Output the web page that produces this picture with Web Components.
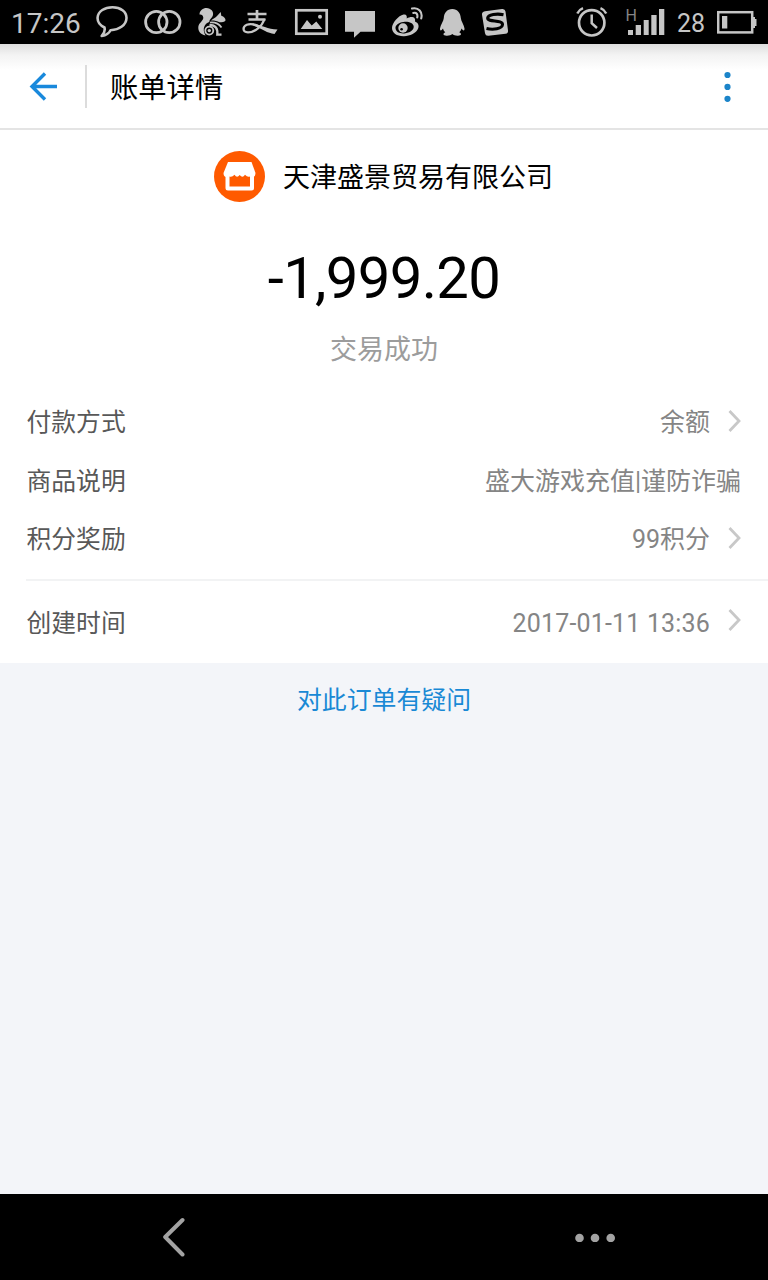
<!DOCTYPE html>
<html lang="zh-CN">
<head>
<meta charset="utf-8">
<title>账单详情</title>
<style>
  body {
    margin: 0;
    height: 1280px;
    overflow: hidden;
    font-family: Roboto, "Noto Sans CJK SC", sans-serif;
    background-color: #f3f5f9;
  }
</style>
</head>
<body>
<bill-page></bill-page>

<script>
// every status icon is drawn on one 44px high strip, so they share a baseline
const STATUS_ICONS = {
  message: [96, 32, `
    <path d="M104.500 27.500C99.500 25 97.300 21.500 97.600 17.500C98.200 11.200 104.500 7.300 112.500 7.300C120.500 7.300 126.600 11.500 126.500 18C126.300 25 119.500 29.700 110.500 30.200C109 33.300 106.200 35.300 101.700 36C104.200 33.500 105.200 30.800 104.500 27.500Z" fill="none" stroke="#c6c6c6" stroke-width="2.600" stroke-linejoin="round"/>`],
  rings: [144, 38, `
    <g fill="none" stroke="#c6c6c6" stroke-width="2.800"><circle cx="156.300" cy="22" r="10.700"/><circle cx="169.300" cy="22" r="10.700"/></g>`],
  squirrel: [198, 28, `
    <path fill="#c6c6c6" d="M199.500 14.500C199.500 10.500 203 8 206.500 8C211 8.200 213.800 11.500 213 15C212.300 18 209.500 19 209.300 22C204.500 23.500 201.800 29 205.500 35.500C200.500 34.500 198 31 198.300 27C198.700 22.500 203.500 21 203.300 17.500C203 15 201.500 14.200 199.500 14.500Z"/>
    <path fill="#c6c6c6" d="M211 20.500C213 18.500 215.500 17.700 217 16L220.700 12L221.300 15.700C224 16.500 225.800 18.500 225.500 20.500C224.500 22.300 222 22.300 219.500 22.300C217 21 214 20.300 211 20.500Z"/>
    <path d="M210 22.500C215.500 22 219.500 24.500 221.500 27.500" fill="none" stroke="#c6c6c6" stroke-width="1.700"/>
    <path d="M209.500 25C215.500 25 218 28.500 217.300 34.700H221.500" fill="none" stroke="#c6c6c6" stroke-width="2.300"/>
    <circle cx="209.300" cy="30.600" r="4" fill="none" stroke="#c6c6c6" stroke-width="1.800"/><circle cx="209.300" cy="30.600" r="1.700" fill="#c6c6c6"/>`],
  alipay: [242, 36, `
    <path d="M247.500 14H266.500M257 10V20M248.500 19.500H265.500" fill="none" stroke="#c6c6c6" stroke-width="2.700"/>
    <path d="M264.500 19C262 26.500 255 32.300 248 32.300C242.200 32.300 242.400 26.700 246.800 24.800C251 23 255.500 24.500 260 27" fill="none" stroke="#c6c6c6" stroke-width="2.300"/>
    <path d="M252.500 23.300C261 25 267 28.800 277.500 29.500L274.500 34C267 33.500 261.500 28.500 252.500 25.300Z" fill="#c6c6c6"/>`],
  picture: [294, 35, `
    <rect x="296.300" y="10.300" width="30.400" height="23.400" fill="none" stroke="#c6c6c6" stroke-width="2.700"/>
    <path d="M300.700 29L307 20L311.700 25.500L316.300 21.500L322.300 29Z" fill="#c6c6c6"/><circle cx="320" cy="16.700" r="2" fill="#c6c6c6"/>`],
  chat: [345, 30, `<path d="M345 11H375V31.700H360.500L354 37.700V31.700H345Z" fill="#c6c6c6"/>`],
  weibo: [391, 32, `
    <path fill="#c6c6c6" fill-rule="evenodd" d="M392 28C392 23 398.500 15.500 403.500 14.500C406.500 14 407.200 16 406.700 18.500C411 16 416 16.500 415 21.500C423 25 417 35.700 404 36.200C397 36.400 392 33 392 28ZM395.500 28.300C396 32.300 400 33.800 404.500 33.400C410 32.900 414 30 413.700 26.500C413.300 23 408.500 21.300 403.500 22C398.500 22.700 395.200 25.200 395.500 28.300Z"/>
    <circle cx="403" cy="28" r="4.700" fill="#c6c6c6"/><circle cx="401.600" cy="29.200" r="1.300" fill="#000"/>
    <path d="M412 8.600C418.500 7 423 12 421.200 18.500M413.300 13C416.500 12 418 14.500 417.200 17.500" fill="none" stroke="#c6c6c6" stroke-width="2.100" stroke-linecap="round"/>`],
  penguin: [439, 26, `
    <path fill="#c6c6c6" d="M452.300 9C447 9 444 13 443.800 18C443.600 21.500 440.500 24.500 440 28.500C439.900 31 441.200 31 443 28.500C443.500 30.300 444.200 31.200 445.300 32.200C442.700 33.300 442.800 35.600 446.500 35.700C449 35.800 451 35.200 452.300 34C453.700 35.200 455.500 35.800 458 35.700C461.700 35.600 461.800 33.300 459.200 32.200C460.300 31.200 461 30.300 461.500 28.500C463.300 31 464.600 31 464.500 28.500C464 24.500 461 21.500 460.800 18C460.500 13 457.500 9 452.300 9Z"/>`],
  sogou: [481, 28, `
    <path fill="#c6c6c6" d="M485 11.300L502 9Q505 8.600 505.500 11.500L508 30.500Q508.400 33.300 505.500 33.800L488.500 35.700Q485.500 36 485 33.200L482 14.700Q481.600 11.900 485 11.300Z"/>
    <path d="M503.500 14.700C497 13.300 488 14.500 487.700 18C487.500 22.500 502.500 19.500 502.500 24.500C502.300 29 493 30 486.500 28.500" fill="none" stroke="#000" stroke-width="3.100"/>`],
  alarm: [576, 32, `
    <circle cx="591.700" cy="22.800" r="12.700" fill="none" stroke="#c6c6c6" stroke-width="2.700"/>
    <path d="M591.700 14.500V23.200L597 28" fill="none" stroke="#c6c6c6" stroke-width="2.500"/>
    <path d="M577.300 13.500C578.500 11 580.500 9.200 583 8.200M606.200 13.500C605 11 603 9.200 600.500 8.200" fill="none" stroke="#c6c6c6" stroke-width="2.500"/>`],
  signal: [626, 39, `
    <text x="625.500" y="20.500" font-size="16" fill="#858585">H</text>
    <path fill="#c6c6c6" d="M628 30h5v5h-5zM635.700 25h5.300v10h-5.300zM643.700 20h5v15h-5zM651.300 15h5.300v20h-5.300zM659 9h5.300v26h-5.300z"/>`],
  battery: [717, 40, `
    <rect x="718.200" y="12.200" width="34" height="20.200" fill="none" stroke="#c6c6c6" stroke-width="2.500"/>
    <path fill="#c6c6c6" d="M752.500 17H755V19H756.500V26H755V28H752.500ZM722 16H727.300V28.500H722Z"/>`]
};

class StatusIcon extends HTMLElement {
  constructor() {
    super();
    this.attachShadow({ mode: 'open' });
  }

  connectedCallback() {
    const [x, width, shapes] = STATUS_ICONS[this.getAttribute('name')];
    this.shadowRoot.innerHTML = `
      <style>
        :host { display: block; flex: none; }
        svg { display: block; }
      </style>
      <svg width="${width}" height="44" viewBox="${x} 0 ${width} 44">${shapes}</svg>
    `;
  }
}

customElements.define('status-icon', StatusIcon);

class StatusBar extends HTMLElement {
  constructor() {
    super();
    this.attachShadow({ mode: 'open' });
    this.shadowRoot.innerHTML = `
      <style>
        :host {
          display: flex;
          align-items: center;
          height: 44px;
          padding: 0 11px;
          box-sizing: border-box;
          background-color: #000;
          color: #c6c6c6;
        }
        .time { width: 85px; font-size: 28px; line-height: 44px; padding-top: 2px; box-sizing: border-box; height: 44px; }
        .apps { display: flex; gap: 16px; }
        .system { display: flex; margin-left: auto; }
        .level { width: 28px; margin: 0 12px; font-size: 25px; line-height: 48px; height: 44px; }
        .signal { margin-left: 18px; }
      </style>
      <span class="time">17:26</span>
      <div class="apps">
        <status-icon name="message"></status-icon>
        <status-icon name="rings"></status-icon>
        <status-icon name="squirrel"></status-icon>
        <status-icon name="alipay"></status-icon>
        <status-icon name="picture"></status-icon>
        <status-icon name="chat"></status-icon>
        <status-icon name="weibo"></status-icon>
        <status-icon name="penguin"></status-icon>
        <status-icon name="sogou"></status-icon>
      </div>
      <div class="system">
        <status-icon name="alarm"></status-icon>
        <status-icon class="signal" name="signal"></status-icon>
        <span class="level">28</span>
        <status-icon name="battery"></status-icon>
      </div>
    `;
  }
}

customElements.define('status-bar', StatusBar);

class TitleBar extends HTMLElement {
  constructor() {
    super();
    this.attachShadow({ mode: 'open' });
    this.shadowRoot.innerHTML = `
      <style>
        :host {
          display: flex;
          align-items: center;
          height: 86px;
          box-sizing: border-box;
          padding: 0 36px 0 29px;
          border-bottom: 2px solid #e4e4e4;
          background: linear-gradient(#dedede, #f3f3f3 11px, #fff 26px);
        }
        svg { display: block; }
        .line { width: 2px; height: 43px; margin: 0 23px 0 28px; background-color: #dcdcdc; }
        .title { flex: 1; padding-top: 6px; font-size: 28.300px; line-height: 40px; color: #000; }
      </style>
      <svg width="28" height="30" viewBox="0 0 28 30" fill="none" stroke="#1989dc" stroke-width="3.400">
        <path d="M28 15.500H3M16 2.500L3 15.500L16 28.500"/>
      </svg>
      <span class="line"></span>
      <span class="title"><slot></slot></span>
      <svg width="8" height="32" viewBox="0 0 8 32" fill="#1b84c9">
        <circle cx="3.500" cy="5" r="3.100"/><circle cx="3.500" cy="16.900" r="3.100"/><circle cx="3.500" cy="28.800" r="3.100"/>
      </svg>
    `;
  }
}

customElements.define('title-bar', TitleBar);

class BillSummary extends HTMLElement {
  constructor() {
    super();
    this.attachShadow({ mode: 'open' });
    this.shadowRoot.innerHTML = `
      <style>
        :host {
          display: flex;
          flex-direction: column;
          align-items: center;
          height: 262px;
          box-sizing: border-box;
          padding-top: 21px;
          background-color: #fff;
        }
        .merchant { display: flex; align-items: center; gap: 18px; height: 51px; margin-right: 1px; font-size: 27px; color: #000; }
        .name { padding-bottom: 3px; }
        .amount { margin-top: 41px; font-size: 58px; line-height: 70px; letter-spacing: -.650px; color: #000; }
        .state { margin-top: 17px; font-size: 27px; line-height: 40px; color: #9c9c9c; }
      </style>
      <div class="merchant">
        <svg width="51" height="51" viewBox="0 0 51 51">
          <circle cx="25.500" cy="25.500" r="25.500" fill="#ff5a00"/>
          <path fill="#fff" d="M14 11H37.500L41.500 22Q41.500 26 38.500 26H12.500Q9.500 26 9.500 22Z"/>
          <path fill="#fff" d="M11.500 22H40V37Q40 39.500 37.500 39.500H14Q11.500 39.500 11.500 37Z"/>
          <path fill="#ff5a00" d="M15.500 25.500Q18 26.500 20.500 23.800Q23 27.500 25.700 24Q28.500 27.500 31 23.800Q33.500 26.500 36 25.500V35.500H15.500Z"/>
        </svg>
        <span class="name"><slot name="merchant"></slot></span>
      </div>
      <div class="amount"><slot name="amount"></slot></div>
      <div class="state"><slot name="state"></slot></div>
    `;
  }
}

customElements.define('bill-summary', BillSummary);

class BillRow extends HTMLElement {
  constructor() {
    super();
    this.attachShadow({ mode: 'open' });
    this.shadowRoot.innerHTML = `
      <style>
        :host {
          display: flex;
          align-items: center;
          height: 58.500px;
          padding: 0 27px 0 26.500px;
          font-size: 25px;
          line-height: 36px;
        }
        .label { flex: 1; padding-top: 4px; font-size: 24.800px; color: #585858; }
        .value { padding-top: 4px; letter-spacing: var(--value-spacing, 0); color: #858585; }
        svg { display: none; margin: var(--arrow-margin, 0) 0 0 18px; }
        :host([link]) svg { display: block; }
      </style>
      <span class="label"></span>
      <span class="value"><slot></slot></span>
      <svg width="13" height="24" viewBox="0 0 13 24" fill="none" stroke="#c8c8c8" stroke-width="2.800">
        <path d="M1.500 2L11 12L1.500 22"/>
      </svg>
    `;
  }

  static get observedAttributes() {
    return ['label'];
  }

  attributeChangedCallback(name, oldValue, newValue) {
    this.shadowRoot.querySelector('.label').textContent = newValue;
  }
}

customElements.define('bill-row', BillRow);

class NavBar extends HTMLElement {
  constructor() {
    super();
    this.attachShadow({ mode: 'open' });
    this.shadowRoot.innerHTML = `
      <style>
        :host {
          display: flex;
          align-items: center;
          justify-content: space-between;
          height: 86px;
          box-sizing: border-box;
          padding: 0 152px 0 162px;
          background-color: #000;
        }
      </style>
      <svg width="24" height="40" viewBox="0 0 24 40" fill="none" stroke="#a3a3a3" stroke-width="4" stroke-linecap="round" stroke-linejoin="round">
        <path d="M20.500 3L3.200 20L20.500 37.500"/>
      </svg>
      <svg width="42" height="10" viewBox="0 0 42 10" fill="#a3a3a3">
        <circle cx="5.500" cy="6" r="4.300"/><circle cx="21" cy="6" r="4.300"/><circle cx="36.700" cy="6" r="4.300"/>
      </svg>
    `;
  }
}

customElements.define('nav-bar', NavBar);

class BillPage extends HTMLElement {
  constructor() {
    super();
    this.attachShadow({ mode: 'open' });
    this.shadowRoot.innerHTML = `
      <style>
        :host { display: flex; flex-direction: column; height: 1280px; }
        .group { background-color: #fff; padding-bottom: 11px; }
        .divider { height: 2px; background: linear-gradient(90deg, #fff 26px, #f2f3f4 26px); }
        .created {
          --value-spacing: .170px;
          --arrow-margin: -4px;
          background-color: #fff;
          padding: 12px 0 11.500px;
        }
        .question { flex: 1; padding-top: 19px; text-align: center; font-size: 24.900px; line-height: 38px; color: #1989d5; }
      </style>
      <status-bar></status-bar>
      <title-bar>账单详情</title-bar>
      <bill-summary>
        <span slot="merchant">天津盛景贸易有限公司</span>
        <span slot="amount">-1,999.20</span>
        <span slot="state">交易成功</span>
      </bill-summary>
      <div class="group">
        <bill-row label="付款方式" link>余额</bill-row>
        <bill-row label="商品说明">盛大游戏充值|谨防诈骗</bill-row>
        <bill-row label="积分奖励" link>99积分</bill-row>
      </div>
      <div class="divider"></div>
      <div class="created">
        <bill-row label="创建时间" link>2017-01-11 13:36</bill-row>
      </div>
      <div class="question">对此订单有疑问</div>
      <nav-bar></nav-bar>
    `;
  }
}

customElements.define('bill-page', BillPage);
</script>
</body>
</html>
